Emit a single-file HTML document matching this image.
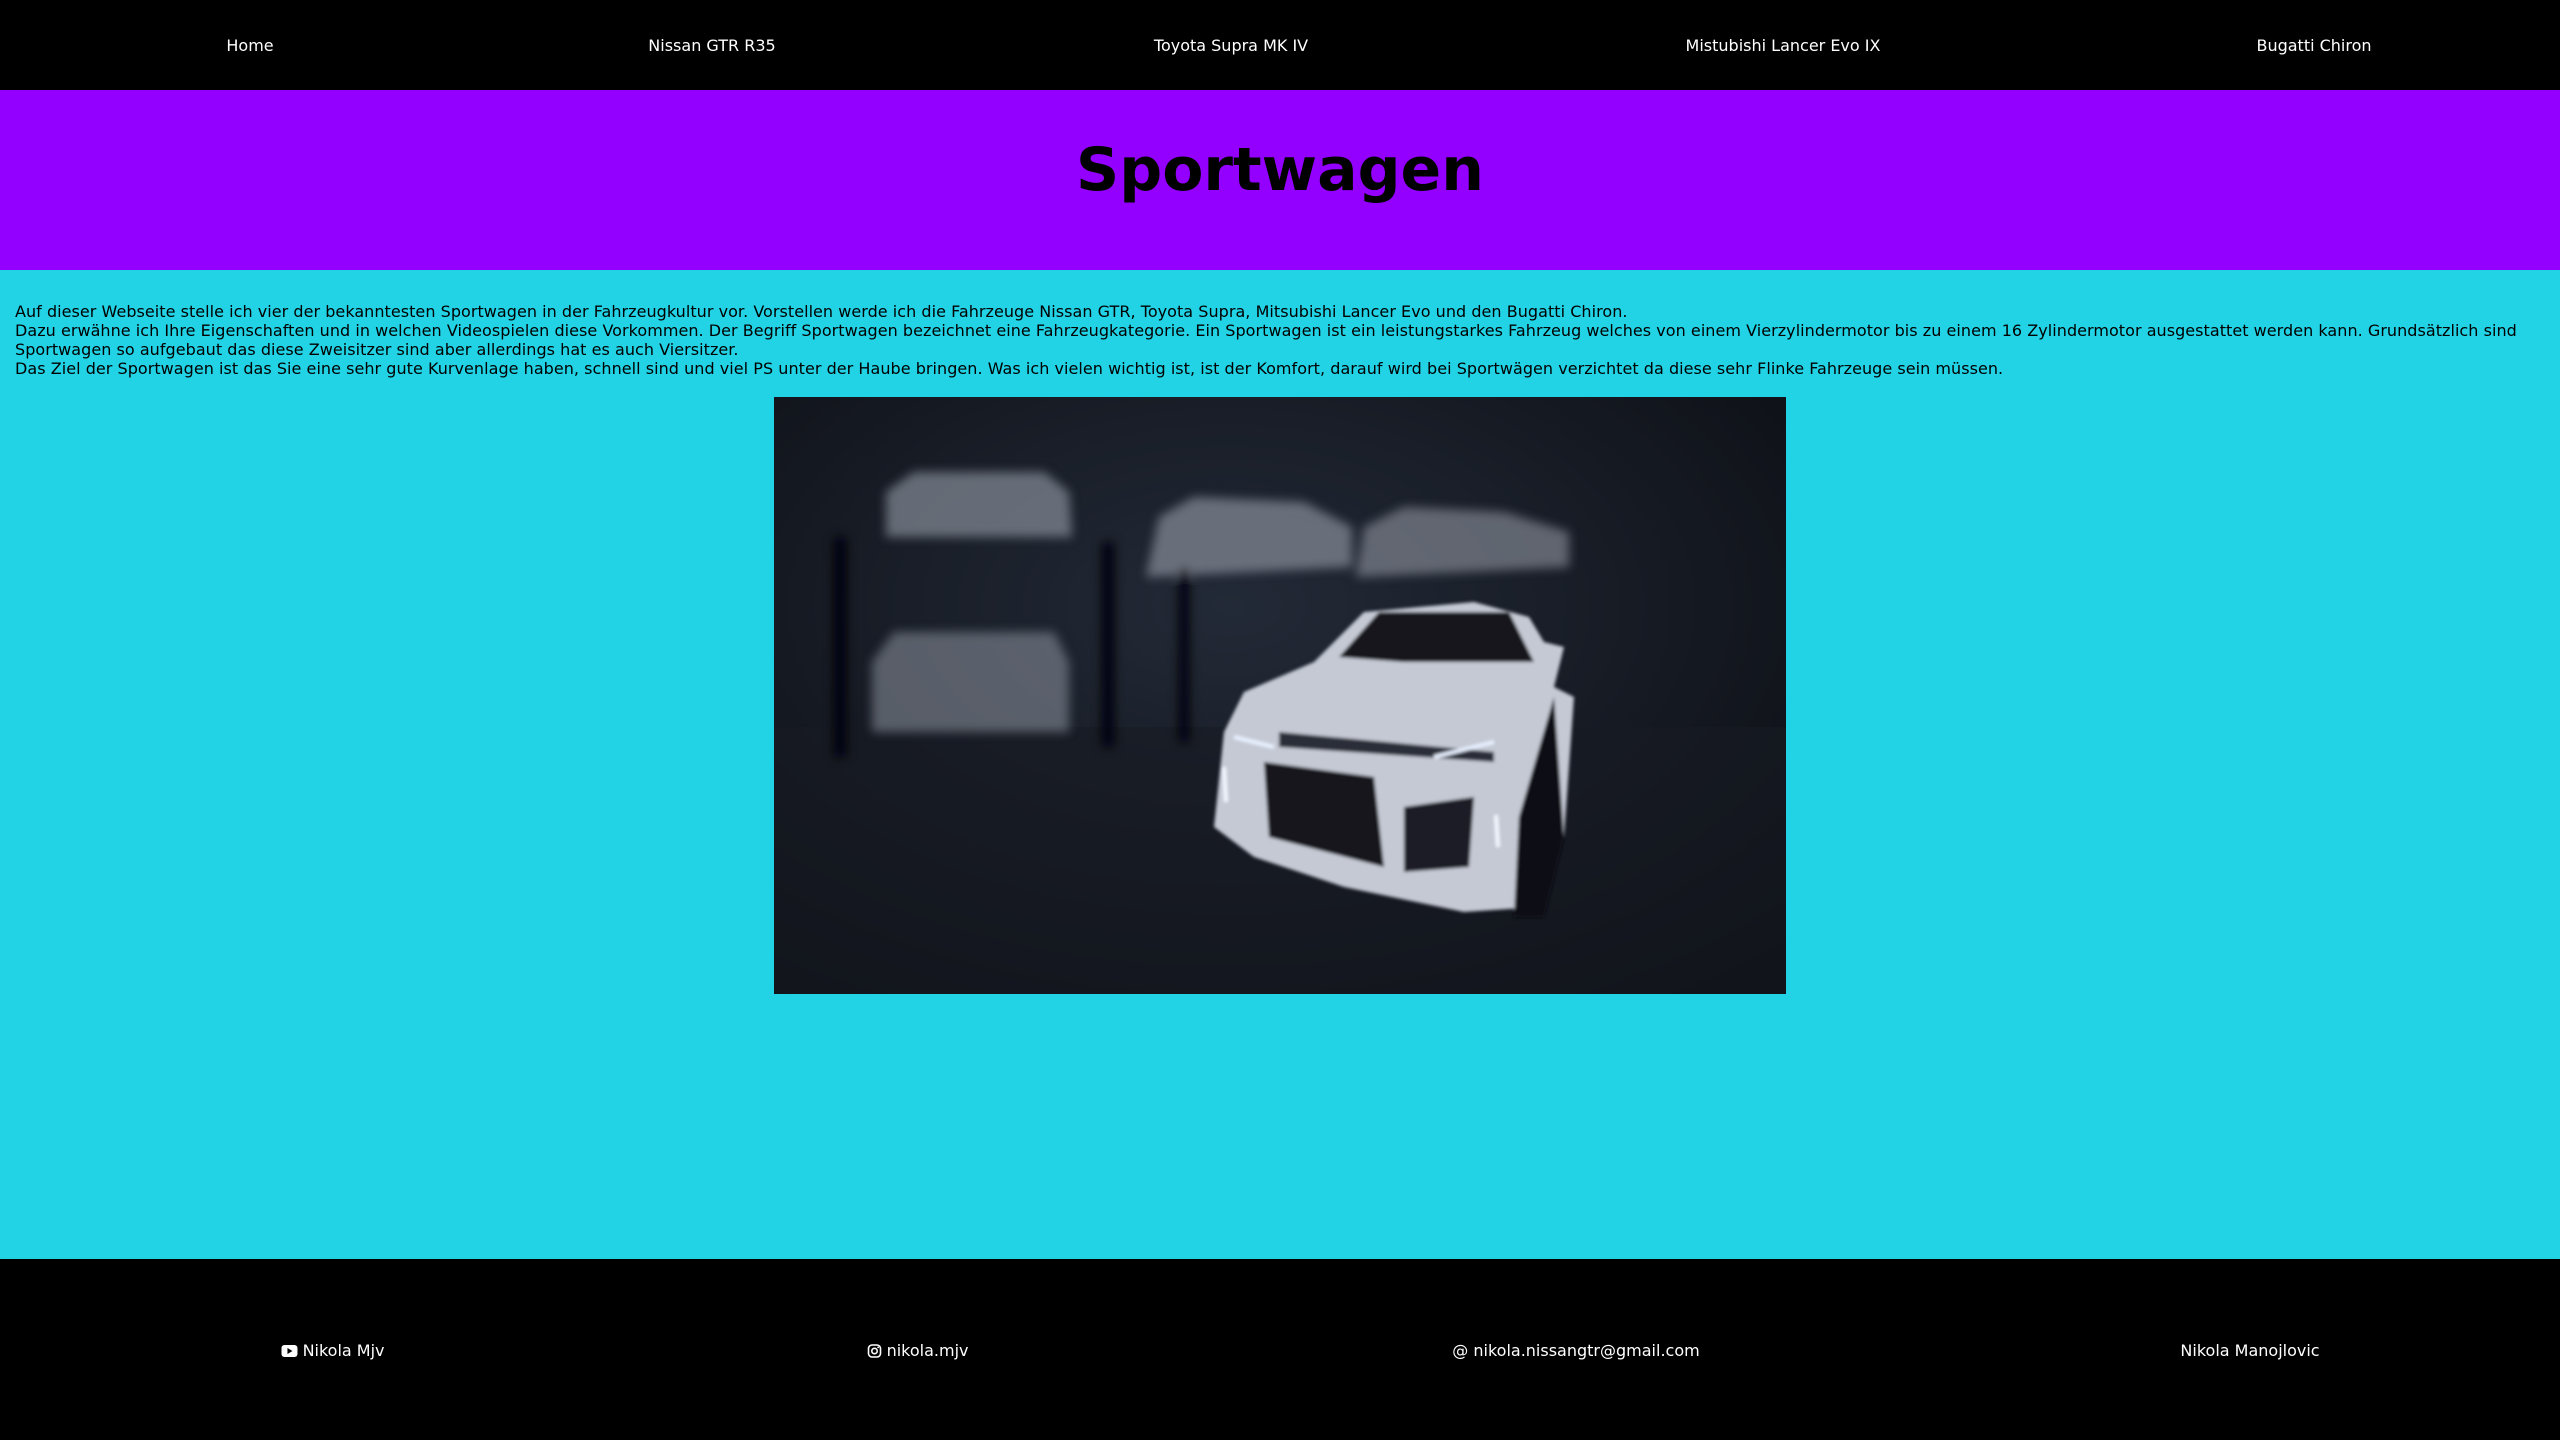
<!DOCTYPE html>
<html><head><meta charset="utf-8"><style>
*{margin:0;padding:0;box-sizing:border-box}
body{width:2560px;height:1440px;background:#22d3e6;font-family:"DejaVu Sans","Liberation Sans",sans-serif;overflow:hidden;position:relative}
nav{position:absolute;left:0;top:0;width:2560px;height:90px;background:#000}
nav a,footer span{position:absolute;color:#fff;font-size:16px;transform:translateX(-50%);white-space:nowrap;text-decoration:none}
nav a{top:36px}
header{position:absolute;top:90px;left:0;width:2560px;height:180px;background:#9400ff;text-align:center}
h1{font-size:60px;font-weight:bold;color:#000;line-height:1;position:absolute;width:100%;top:50px}
.txt{position:absolute;top:302px;left:15px;right:15px;font-size:16px;line-height:19px;color:#000;letter-spacing:0.04px}
.img{position:absolute;left:774px;top:397px;width:1012px;height:597px}
footer{position:absolute;top:1259px;left:0;width:2560px;height:181px;background:#000}
footer span{top:82px}
</style></head><body>
<nav>
<a style="left:250px">Home</a>
<a style="left:712px">Nissan GTR R35</a>
<a style="left:1231px">Toyota Supra MK IV</a>
<a style="left:1783px">Mistubishi Lancer Evo IX</a>
<a style="left:2314px">Bugatti Chiron</a>
</nav>
<header><h1>Sportwagen</h1></header>
<div class="txt">Auf dieser Webseite stelle ich vier der bekanntesten Sportwagen in der Fahrzeugkultur vor. Vorstellen werde ich die Fahrzeuge Nissan GTR, Toyota Supra, Mitsubishi Lancer Evo und den Bugatti Chiron.<br>Dazu erwähne ich Ihre Eigenschaften und in welchen Videospielen diese Vorkommen. Der Begriff Sportwagen bezeichnet eine Fahrzeugkategorie. Ein Sportwagen ist ein leistungstarkes Fahrzeug welches von einem Vierzylindermotor bis zu einem 16 Zylindermotor ausgestattet werden kann. Grundsätzlich sind Sportwagen so aufgebaut das diese Zweisitzer sind aber allerdings hat es auch Viersitzer.<br>Das Ziel der Sportwagen ist das Sie eine sehr gute Kurvenlage haben, schnell sind und viel PS unter der Haube bringen. Was ich vielen wichtig ist, ist der Komfort, darauf wird bei Sportwägen verzichtet da diese sehr Flinke Fahrzeuge sein müssen.</div>
<svg class="img" viewBox="0 0 1012 597" xmlns="http://www.w3.org/2000/svg">
<defs>
<radialGradient id="bg" cx="0.45" cy="0.35" r="0.8"><stop offset="0" stop-color="#232a37"/><stop offset="1" stop-color="#0a0c11"/></radialGradient>
<filter id="b"><feGaussianBlur stdDeviation="5"/></filter>
<filter id="b2"><feGaussianBlur stdDeviation="1.5"/></filter>
</defs>
<rect width="1012" height="597" fill="url(#bg)"/>
<rect y="330" width="1012" height="267" fill="#171b23" opacity=".6"/>
<g filter="url(#b)" fill="#9aa0ac">
<path d="M112 95 L140 75 L270 75 L295 95 L298 140 L112 140Z" opacity=".6"/>
<path d="M372 180 L385 120 L420 100 L530 105 L578 130 L578 170Z" opacity=".6"/>
<path d="M582 180 L590 130 L630 110 L730 115 L795 135 L795 170Z" opacity=".55"/>
<path d="M98 265 L120 235 L280 235 L295 265 L295 335 L98 335Z" opacity=".5"/>
<rect x="60" y="140" width="12" height="220" fill="#050608"/>
<rect x="328" y="145" width="12" height="205" fill="#050608"/>
<rect x="405" y="170" width="10" height="175" fill="#050608"/>
</g>
<g filter="url(#b2)">
<path d="M450 335 L470 295 L540 265 L590 215 L700 205 L755 220 L770 245 L790 250 L780 290 L800 300 L790 440 L765 510 L690 515 L570 490 L480 460 L440 430 Z" fill="#c4c9d4"/>
<path d="M565 260 L605 215 L735 215 L760 265 L630 265 Z" fill="#15181e"/>
<path d="M490 365 L600 380 L610 470 L495 440 Z" fill="#15181e"/>
<path d="M630 410 L700 400 L695 470 L630 475 Z" fill="#1b1e25"/>
<path d="M505 335 L720 355 L720 365 L505 350Z" fill="#2a2e37"/>
<path d="M780 300 L790 440 L770 520 L740 520 L745 420Z" fill="#0c0e12"/>
<path d="M460 340 L500 350 M660 360 L720 345" stroke="#e8f0ff" stroke-width="4"/>
<path d="M450 370 L452 405 M722 418 L724 450" stroke="#f4f8ff" stroke-width="4"/>
</g>
</svg>
<footer>
<span style="left:333px"><svg width="16" height="12" viewBox="0 0 16 12" style="vertical-align:-1px"><rect width="16" height="12" rx="3" fill="#fff"/><path d="M6 3 L11 6 L6 9Z" fill="#000"/></svg> Nikola Mjv</span>
<span style="left:918px"><svg width="14" height="14" viewBox="0 0 14 14" style="vertical-align:-2px"><rect x="1" y="1" width="12" height="12" rx="3.5" fill="none" stroke="#fff" stroke-width="1.6"/><circle cx="7" cy="7" r="2.7" fill="none" stroke="#fff" stroke-width="1.6"/><circle cx="10.6" cy="3.4" r="0.9" fill="#fff"/></svg> nikola.mjv</span>
<span style="left:1576px">@ nikola.nissangtr@gmail.com</span>
<span style="left:2250px">Nikola Manojlovic</span>
</footer>
</body></html>
